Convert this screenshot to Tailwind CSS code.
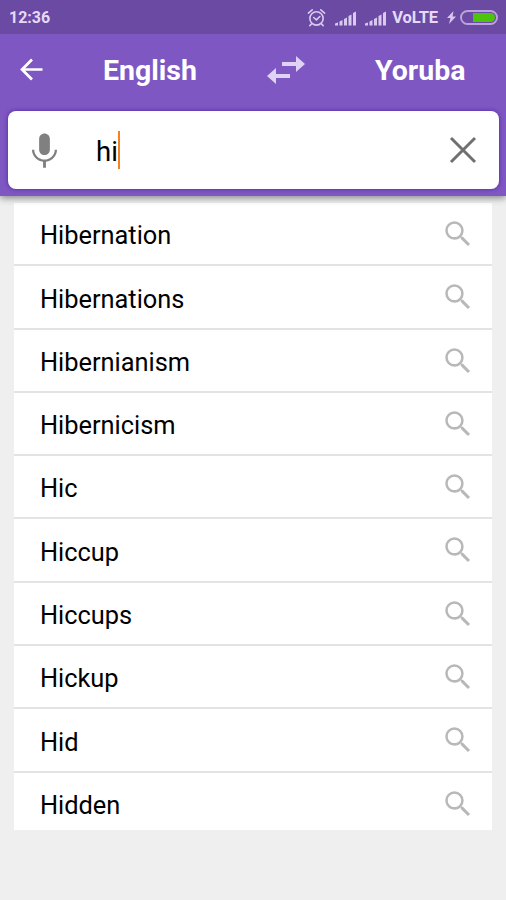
<!DOCTYPE html>
<html lang="en">
<head>
<meta charset="utf-8">
<title>Dictionary search</title>
<script src="https://cdn.jsdelivr.net/npm/@tailwindcss/browser@4"></script>
</head>
<body class="w-[506px] h-[900px] overflow-hidden bg-[#efefef] flex flex-col font-[Roboto,sans-serif] text-black">
<svg class="hidden">
  <symbol id="search" viewBox="0 0 24 24"><path d="M15.500 14h-.79l-.28-.27A6.471 6.471 0 0 0 16 9.500 6.500 6.500 0 1 0 9.500 16c1.610 0 3.090-.59 4.230-1.570l.27.28v.79l5 4.990L20.490 19l-4.990-5zm-6 .2C6.900 14.200 4.800 12.100 4.800 9.500S6.900 4.800 9.500 4.800 14.200 6.900 14.200 9.500 12.100 14.200 9.500 14.200z"/></symbol>
  <symbol id="signal" viewBox="0 0 22 16"><path d="M0 15.500v-2l3-1v3zM4.500 15.500v-4l3-1.500v5.500zM9 15.500V9l3-1.500v8zM13.500 15.500v-9.500l3-1.500v11zM18 15.500V3l3-1.500v14z"/></symbol>
</svg>
<header class="relative z-10 shrink-0 h-[196px] flex flex-col bg-[#7e57c2] shadow-[0_2px_7px_rgba(0,0,0,0.45)]">
  <div class="h-[34px] bg-[#6b4aa4] flex items-center pl-[9px] pr-[8px] text-[#e5d9f6] fill-[#d9c9ef]">
    <span class="text-[16px] leading-[20px] font-bold pt-[2px]">12:36</span>
    <svg class="ml-auto w-[19px] h-[19px] fill-none stroke-[#d9c9ef]" viewBox="0 0 20 20" stroke-width="1.700" stroke-linecap="round"><circle cx="10" cy="11" r="7"/><path d="M1.500 5.500l4-3.500M18.500 5.500l-4-3.500M7 10l3 2.500 3.500-3.500M4.500 17l-1.500 1.500M15.500 17l1.500 1.500"/></svg>
    <svg class="ml-[9px] mt-[2px] w-[22px] h-[16px]"><use href="#signal"/></svg>
    <svg class="ml-[8px] mt-[2px] w-[22px] h-[16px]"><use href="#signal"/></svg>
    <span class="ml-[5px] pt-[2px] text-[16.500px] leading-[20px] font-bold tracking-[-0.100px]">VoLTE</span>
    <svg class="ml-[9px] w-[9px] h-[13px]" viewBox="0 0 9 13"><path d="M6.500 0L0 7h3.500L2 13l7-7.500H5.500z"/></svg>
    <span class="ml-[4px] w-[38px] h-[15px] rounded-full border-2 border-[#b9a3da] flex justify-end p-[1px]"><span class="w-[22px] rounded-r-full bg-[#4cc40b]"></span></span>
  </div>
  <div class="h-[77px] flex items-center">
    <svg class="ml-[16px] mt-[-6px] w-[31px] h-[31px] fill-none stroke-white" viewBox="0 0 31 31" stroke-width="2.700"><path d="M26.500 15.500H6M16 5.500L6 15.500L16 25.500"/></svg>
    <span class="ml-[56px] w-[94px] text-[28.500px] leading-[34px] font-bold text-white mt-[-3px]">English</span>
    <svg class="ml-[70px] mt-[-6px] w-[38px] h-[30px] fill-[#e0d2f5]" viewBox="0 0 38 30"><path d="M15 7h14V1l9 8-9 8v-6H15zM23 19H9v-6l-9 8 9 8v-6h14z"/></svg>
    <span class="ml-[70px] text-[28.500px] leading-[34px] font-bold text-white mt-[-3px]">Yoruba</span>
  </div>
  <div class="mx-[7.500px] h-[78px] rounded-[8px] bg-white flex items-center shadow-[0_0_4px_rgba(70,25,150,0.8)]">
    <svg class="ml-[15px] mt-[2px] w-[43px] h-[43px] fill-[#808080]" viewBox="0 0 24 24"><path d="M12 14c1.660 0 3-1.340 3-3V5c0-1.660-1.340-3-3-3S9 3.340 9 5v6c0 1.660 1.340 3 3 3zM17.700 11c0 3.100-2.700 5.500-5.700 5.500S6.300 14.100 6.300 11H5c0 3.410 2.720 6.230 6.200 6.720V21h1.600v-3.280c3.480-.480 6.200-3.300 6.200-6.720z"/></svg>
    <span class="ml-[30.500px] pt-[3px] text-[27.500px] leading-[34px]">hi</span>
    <span class="w-[2px] h-[38px] bg-[#f58220]"></span>
    <svg class="ml-auto mr-[22px] w-[28px] h-[28px] fill-none stroke-[#707070]" viewBox="0 0 28 28" stroke-width="3"><path d="M2 2L26 26M26 2L2 26"/></svg>
  </div>
</header>
<main class="mt-[7px] ml-[14.400px] mr-[13.600px] h-[627px] shrink-0 overflow-hidden bg-white text-[25.400px] leading-[32px] fill-[#b8b8b8]">
  <div class="h-[63.300px] border-b-2 border-[#e3e3e3] flex items-start justify-between pl-[25.500px] pr-[17px] pt-[14px]"><span class="pt-[2.300px]">Hibernation</span><svg class="w-[34px] h-[34px]"><use href="#search"/></svg></div>
  <div class="h-[63.300px] border-b-2 border-[#e3e3e3] flex items-start justify-between pl-[25.500px] pr-[17px] pt-[14px]"><span class="pt-[2.300px]">Hibernations</span><svg class="w-[34px] h-[34px]"><use href="#search"/></svg></div>
  <div class="h-[63.300px] border-b-2 border-[#e3e3e3] flex items-start justify-between pl-[25.500px] pr-[17px] pt-[14px]"><span class="pt-[2.300px]">Hibernianism</span><svg class="w-[34px] h-[34px]"><use href="#search"/></svg></div>
  <div class="h-[63.300px] border-b-2 border-[#e3e3e3] flex items-start justify-between pl-[25.500px] pr-[17px] pt-[14px]"><span class="pt-[2.300px]">Hibernicism</span><svg class="w-[34px] h-[34px]"><use href="#search"/></svg></div>
  <div class="h-[63.300px] border-b-2 border-[#e3e3e3] flex items-start justify-between pl-[25.500px] pr-[17px] pt-[14px]"><span class="pt-[2.300px]">Hic</span><svg class="w-[34px] h-[34px]"><use href="#search"/></svg></div>
  <div class="h-[63.300px] border-b-2 border-[#e3e3e3] flex items-start justify-between pl-[25.500px] pr-[17px] pt-[14px]"><span class="pt-[2.300px]">Hiccup</span><svg class="w-[34px] h-[34px]"><use href="#search"/></svg></div>
  <div class="h-[63.300px] border-b-2 border-[#e3e3e3] flex items-start justify-between pl-[25.500px] pr-[17px] pt-[14px]"><span class="pt-[2.300px]">Hiccups</span><svg class="w-[34px] h-[34px]"><use href="#search"/></svg></div>
  <div class="h-[63.300px] border-b-2 border-[#e3e3e3] flex items-start justify-between pl-[25.500px] pr-[17px] pt-[14px]"><span class="pt-[2.300px]">Hickup</span><svg class="w-[34px] h-[34px]"><use href="#search"/></svg></div>
  <div class="h-[63.300px] border-b-2 border-[#e3e3e3] flex items-start justify-between pl-[25.500px] pr-[17px] pt-[14px]"><span class="pt-[2.300px]">Hid</span><svg class="w-[34px] h-[34px]"><use href="#search"/></svg></div>
  <div class="flex items-start justify-between pl-[25.500px] pr-[17px] pt-[14px]"><span class="pt-[2.300px]">Hidden</span><svg class="w-[34px] h-[34px]"><use href="#search"/></svg></div>
</main>
</body>
</html>
